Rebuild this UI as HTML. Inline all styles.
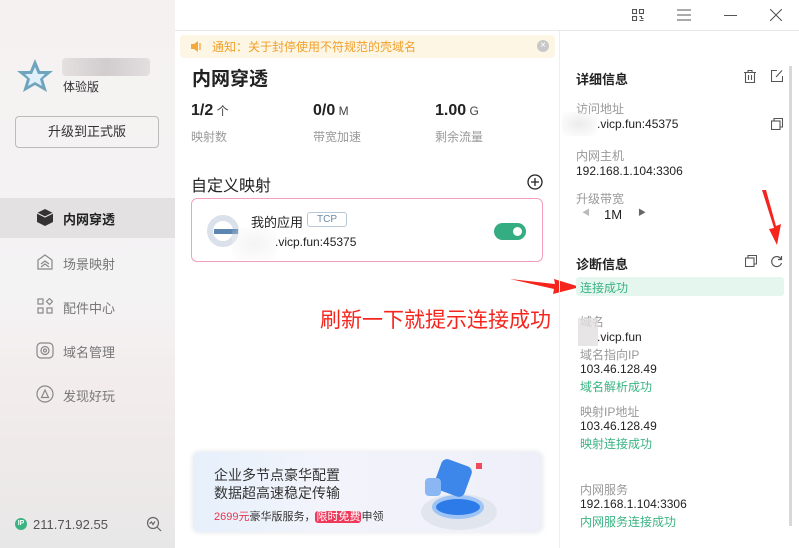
<!DOCTYPE html>
<html><head><meta charset="utf-8"><style>
*{margin:0;padding:0;box-sizing:border-box}
body{width:799px;height:548px;overflow:hidden;font-family:"Liberation Sans","Noto Sans CJK SC",sans-serif;background:#fff;position:relative;color:#333}
.a{position:absolute;white-space:nowrap}
#side{position:absolute;left:0;top:0;width:175px;height:548px;background:linear-gradient(#f5f1f1,#f4f3f4 55%,#f3ecec 70%,#e8e7e7)}
.nav{font-size:13px;color:#777}
.lbl{font-size:12px;color:#999}
.val{font-size:12px;color:#222}
.ok{font-size:12px;color:#3bb383}
</style></head><body>
<div id="side"></div>
<svg class="a" style="left:16px;top:58px" width="38" height="36" viewBox="0 0 38 36"><polygon points="19,1 24,13 37,13 27,21 31,34 19,27 7,34 11,21 1,13 14,13" fill="#6fa4bf"/><polygon points="19,9 22,16 29,16 24,21 26,28 19,24 12,28 14,21 9,16 16,16" fill="#dff0fa"/></svg>
<div class="a" style="left:62px;top:58px;width:88px;height:18px;background:linear-gradient(90deg,#e0dcdc,#c8c4c6,#dedadc);border-radius:4px;opacity:.8"></div>
<div class="a" style="left:63px;top:78px;font-size:12px;color:#333">体验版</div>
<div class="a" style="left:15px;top:116px;width:144px;height:32px;border:1px solid #bbb;border-radius:4px;font-size:13px;text-align:center;line-height:30px;color:#333">升级到正式版</div>
<div class="a" style="left:0;top:198px;width:175px;height:40px;background:#e3e1e2"></div>
<svg class="a" style="left:37px;top:209px" width="16" height="17" viewBox="0 0 16 17"><polygon points="8,0 16,4 16,13 8,17 0,13 0,4" fill="#333"/><polyline points="0,4 8,8 16,4 M8,8 8,17" stroke="#e3e1e2" stroke-width="1.2" fill="none"/></svg>
<div class="a" style="left:63px;top:209px;font-size:13px;font-weight:bold;color:#222">内网穿透</div>
<svg class="a" style="left:37px;top:254px" width="16" height="16" viewBox="0 0 16 16" fill="none" stroke="#888" stroke-width="1.2"><path d="M8 1 L15 6 V15 H1 V6Z"/><path d="M4 10 L8 7 L12 10 M4 13 L8 10 L12 13"/></svg>
<div class="a nav" style="left:63px;top:254px">场景映射</div>
<svg class="a" style="left:37px;top:298px" width="16" height="16" viewBox="0 0 16 16" fill="none" stroke="#888" stroke-width="1.2"><rect x="1" y="1" width="5" height="5"/><rect x="1" y="10" width="5" height="5"/><rect x="10" y="10" width="5" height="5"/><path d="M12.5 0.5 L15.5 3.5 L12.5 6.5 L9.5 3.5Z"/></svg>
<div class="a nav" style="left:63px;top:298px">配件中心</div>
<svg class="a" style="left:36px;top:342px" width="18" height="17" viewBox="0 0 18 17" fill="none" stroke="#888" stroke-width="1.2"><rect x="1" y="1" width="16" height="15" rx="4"/><circle cx="9" cy="8.5" r="4"/><circle cx="9" cy="8.5" r="1.5"/></svg>
<div class="a nav" style="left:63px;top:342px">域名管理</div>
<svg class="a" style="left:36px;top:385px" width="18" height="18" viewBox="0 0 18 18" fill="none" stroke="#888" stroke-width="1.2"><circle cx="9" cy="9" r="8"/><path d="M5.5 12.5 L9 5 L12.5 12.5 Z"/></svg>
<div class="a nav" style="left:63px;top:386px">发现好玩</div>
<div class="a" style="left:15px;top:518px;width:12px;height:12px;border-radius:50%;background:#3bb383;color:#fff;font-size:7px;line-height:12px;text-align:center;font-weight:bold">IP</div>
<div class="a" style="left:33px;top:517px;font-size:13px;color:#555">211.71.92.55</div>
<svg class="a" style="left:146px;top:516px" width="16" height="16" viewBox="0 0 16 16" fill="none" stroke="#666" stroke-width="1.2"><circle cx="7" cy="7" r="5.5"/><path d="M11 11 L15 15 M3.5 7.5 L5.5 6 L7 8.5 L9 5.5"/></svg>

<div class="a" style="left:175px;top:30px;width:624px;height:1px;background:#e8e8e8"></div>
<svg class="a" style="left:632px;top:9px" width="12" height="12" viewBox="0 0 12 12" fill="none" stroke="#555" stroke-width="1.1"><rect x="0.5" y="0.5" width="4" height="4"/><rect x="7.5" y="0.5" width="4" height="4"/><rect x="0.5" y="7.5" width="4" height="4"/><path d="M7.5 7.5h2v2h2M7.5 11.5h4"/></svg>
<svg class="a" style="left:677px;top:9px" width="14" height="12" viewBox="0 0 14 12" stroke="#555" stroke-width="1.1"><path d="M0 1h14M0 6h14M0 11h14"/></svg>
<div class="a" style="left:724px;top:15px;width:13px;height:1px;background:#555"></div>
<svg class="a" style="left:770px;top:9px" width="12" height="12" viewBox="0 0 12 12" stroke="#555" stroke-width="1.1"><path d="M0 0L12 12M12 0L0 12"/></svg>

<div class="a" style="left:180px;top:35px;width:375px;height:23px;background:#fdf6e4;border-radius:4px"></div>
<svg class="a" style="left:191px;top:41px" width="12" height="11" viewBox="0 0 12 11"><path d="M0 3h3l4-3v11l-4-3H0z" fill="#f3a93b"/><path d="M9 2v7" stroke="#f3a93b" stroke-width="1.3"/></svg>
<div class="a" style="left:212px;top:38px;font-size:12px;color:#f0a02a">通知：关于封停使用不符规范的壳域名</div>
<div class="a" style="left:537px;top:40px;width:12px;height:12px;border-radius:50%;background:#c8c8c8;color:#fff;font-size:10px;line-height:12px;text-align:center">×</div>

<div class="a" style="left:192px;top:64px;font-size:19px;font-weight:bold;color:#222">内网穿透</div>
<div class="a" style="left:191px;top:102px;font-size:16px;font-weight:bold;color:#222">1/2<span style="font-size:12px;font-weight:normal;color:#444"> 个</span></div>
<div class="a" style="left:313px;top:102px;font-size:16px;font-weight:bold;color:#222">0/0<span style="font-size:12px;font-weight:normal;color:#444"> M</span></div>
<div class="a" style="left:435px;top:102px;font-size:16px;font-weight:bold;color:#222">1.00<span style="font-size:12px;font-weight:normal;color:#444"> G</span></div>
<div class="a lbl" style="left:191px;top:128px;font-size:12px">映射数</div>
<div class="a lbl" style="left:313px;top:128px">带宽加速</div>
<div class="a lbl" style="left:435px;top:128px">剩余流量</div>

<div class="a" style="left:191px;top:172px;font-size:16px;color:#222">自定义映射</div>
<svg class="a" style="left:527px;top:174px" width="16" height="16" viewBox="0 0 16 16" fill="none" stroke="#222" stroke-width="1.3"><circle cx="8" cy="8" r="7"/><path d="M8 4v8M4 8h8"/></svg>
<div class="a" style="left:191px;top:198px;width:352px;height:64px;border:1px solid #f4a0b8;border-radius:6px"></div>
<div class="a" style="left:207px;top:215px;width:32px;height:32px;border-radius:50%;border:6px solid #dbe1ea"></div>
<div class="a" style="left:214px;top:229px;width:24px;height:5px;background:#5e86b2"></div>
<div class="a" style="left:232px;top:228px;width:45px;height:32px;background:radial-gradient(#f4f4f4,#fff0);"></div>
<div class="a" style="left:251px;top:212px;font-size:13px;color:#222">我的应用</div>
<div class="a" style="left:307px;top:212px;width:40px;height:15px;border:1px solid #b7c7d6;border-radius:3px;font-size:10px;color:#6a8aa6;text-align:center;line-height:13px">TCP</div>
<div class="a" style="left:275px;top:235px;font-size:12px;color:#222">.vicp.fun:45375</div>
<div class="a" style="left:494px;top:223px;width:32px;height:17px;border-radius:9px;background:#34ad82"></div>
<div class="a" style="left:513px;top:227px;width:9px;height:9px;border-radius:50%;background:#fff"></div>

<div class="a" style="left:320px;top:304px;font-size:21px;color:#f5251e;font-family:'Noto Sans CJK SC',sans-serif">刷新一下就提示连接成功</div>
<svg class="a" style="left:510px;top:275px" width="70" height="22" viewBox="0 0 70 22"><path d="M0 4 L45 9 L44 4 L70 12 L43 19 L44 14 Z" fill="#f5251e"/></svg>

<div class="a" style="left:193px;top:452px;width:349px;height:80px;border-radius:6px;background:linear-gradient(90deg,#e6f0fb,#f3f4fb 40%,#eeeff8);box-shadow:0 0 6px rgba(0,0,0,.12)"></div>
<div class="a" style="left:214px;top:466px;font-size:14px;color:#333;line-height:18px">企业多节点豪华配置<br>数据超高速稳定传输</div>
<div class="a" style="left:214px;top:508px;font-size:11px;color:#333"><span style="color:#e8364f">2699元</span>豪华版服务，<span style="background:#f0385a;color:#fff;border-radius:3px;padding:0 1px">限时免费</span>申领</div>
<div class="a" style="left:421px;top:494px;width:76px;height:36px;border-radius:50%;background:#e0e5ee"></div>
<div class="a" style="left:432px;top:495px;width:52px;height:24px;border-radius:50%;background:#2c7be8;border:4px solid #9ec4f5"></div>
<div class="a" style="left:437px;top:462px;width:32px;height:32px;background:#3d86ea;transform:rotate(20deg);border-radius:6px"></div>
<div class="a" style="left:425px;top:478px;width:16px;height:18px;background:#8ab7f3;border-radius:4px"></div>
<div class="a" style="left:476px;top:463px;width:6px;height:6px;background:#f04a5a"></div>

<div class="a" style="left:559px;top:31px;width:1px;height:517px;background:#eee"></div>
<div class="a" style="left:789px;top:66px;width:3px;height:460px;background:#d8d8d8"></div>
<div class="a" style="left:576px;top:69px;font-size:13px;font-weight:bold;color:#222">详细信息</div>
<svg class="a" style="left:744px;top:70px" width="12" height="13" viewBox="0 0 12 13" fill="none" stroke="#555" stroke-width="1.1"><path d="M0 2.5h12M4 2.5V0.5h4v2M1.5 2.5V12.5h9V2.5M4.5 5v5M7.5 5v5"/></svg>
<svg class="a" style="left:771px;top:70px" width="12" height="12" viewBox="0 0 12 12" fill="none" stroke="#555" stroke-width="1.1"><path d="M6 .5H.5v11h11V6M5 7l6-6.5"/></svg>
<div class="a lbl" style="left:576px;top:100px">访问地址</div>
<div class="a" style="left:562px;top:112px;width:35px;height:24px;background:radial-gradient(#ececec,#fff0);"></div>
<div class="a val" style="left:597px;top:117px">.vicp.fun:45375</div>
<svg class="a" style="left:771px;top:118px" width="12" height="12" viewBox="0 0 12 12" fill="none" stroke="#555" stroke-width="1.1"><rect x=".5" y="3" width="8.5" height="8.5"/><path d="M3 3V.5h8.5V9H9"/></svg>
<div class="a lbl" style="left:576px;top:147px">内网主机</div>
<div class="a val" style="left:576px;top:164px">192.168.1.104:3306</div>
<div class="a lbl" style="left:576px;top:190px">升级带宽</div>
<div class="a" style="left:582px;top:207px;font-size:8px;color:#bbb">◀</div>
<div class="a val" style="left:604px;top:207px;font-size:13px">1M</div>
<div class="a" style="left:638px;top:207px;font-size:8px;color:#666">▶</div>
<svg class="a" style="left:762px;top:190px" width="20" height="55" viewBox="0 0 20 55"><path d="M0 0 L12 38 L7 39 L15 55 L19 34 L14 36 L4 0Z" fill="#f5251e"/></svg>
<div class="a" style="left:576px;top:254px;font-size:13px;font-weight:bold;color:#222">诊断信息</div>
<svg class="a" style="left:745px;top:255px" width="12" height="12" viewBox="0 0 12 12" fill="none" stroke="#555" stroke-width="1.1"><rect x=".5" y="3" width="8.5" height="8.5"/><path d="M3 3V.5h8.5V9H9"/></svg>
<svg class="a" style="left:770px;top:255px" width="13" height="13" viewBox="0 0 13 13" fill="none" stroke="#555" stroke-width="1.2"><path d="M11 4A5 5 0 1 0 11.5 8"/><path d="M11.5 1v3.5H8" /></svg>
<div class="a" style="left:576px;top:277px;width:208px;height:19px;background:#e5f6ee;border-radius:3px"></div>
<div class="a ok" style="left:580px;top:279px">连接成功</div>
<div class="a lbl" style="left:580px;top:313px">域名</div>
<div class="a" style="left:578px;top:318px;width:20px;height:28px;background:#e2dfe0;opacity:.8"></div>
<div class="a val" style="left:597px;top:330px">.vicp.fun</div>
<div class="a lbl" style="left:580px;top:346px">域名指向IP</div>
<div class="a val" style="left:580px;top:362px">103.46.128.49</div>
<div class="a ok" style="left:580px;top:378px">域名解析成功</div>
<div class="a lbl" style="left:580px;top:403px">映射IP地址</div>
<div class="a val" style="left:580px;top:419px">103.46.128.49</div>
<div class="a ok" style="left:580px;top:435px">映射连接成功</div>
<div class="a lbl" style="left:580px;top:481px">内网服务</div>
<div class="a val" style="left:580px;top:497px">192.168.1.104:3306</div>
<div class="a ok" style="left:580px;top:513px">内网服务连接成功</div>
</body></html>
